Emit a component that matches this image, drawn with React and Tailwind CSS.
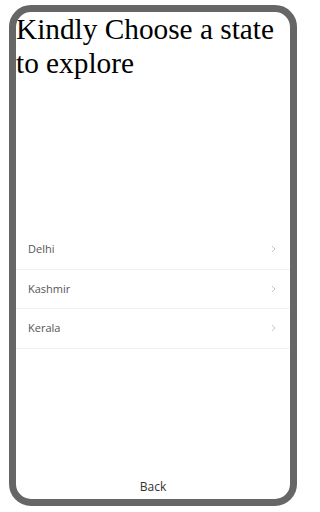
import React from "react";

function Chevron() {
  return (
    <svg width="5" height="8" viewBox="0 0 5 8" fill="none">
      <path d="M1 1l3 3-3 3" stroke="#c4c4c4" strokeWidth="1" />
    </svg>
  );
}

export default function App() {
  const states = ["Delhi", "Kashmir", "Kerala"];
  return (
    <div className="w-[301px] h-[512px] bg-white pt-[5px] pl-[9px]">
      <div className="w-[288px] h-[501px] border-[7px] border-[#666666] rounded-[22px] flex flex-col overflow-hidden bg-white">
        <h1
          className="text-[29.3px] leading-[34px] text-black m-0 font-normal"
          style={{ fontFamily: '"Liberation Serif", "Times New Roman", serif' }}
        >
          Kindly Choose a state to explore
        </h1>
        <div
          className="mt-[150px] flex flex-col"
          style={{ fontFamily: '"Open Sans", sans-serif' }}
        >
          {states.map((s) => (
            <div
              key={s}
              className="h-[39.5px] flex items-center justify-between pl-[12px] pr-[14px] border-b border-[#f2f2f2]"
            >
              <span className="text-[11px] text-[#555555]">{s}</span>
              <Chevron />
            </div>
          ))}
        </div>
        <div className="flex-1" />
        <div
          className="text-center text-[12px] text-[#333333] pb-[3px]"
          style={{ fontFamily: '"Open Sans", sans-serif' }}
        >
          Back
        </div>
      </div>
    </div>
  );
}
